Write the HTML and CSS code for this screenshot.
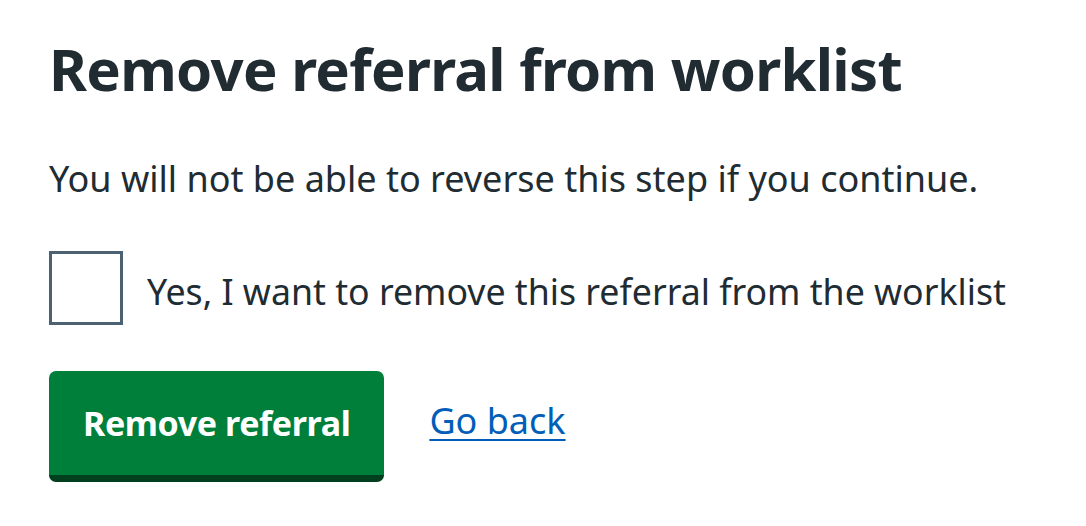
FILE: index.html
```html
<!DOCTYPE html>
<html lang="en">
<head>
<meta charset="utf-8">
<title>Remove referral from worklist</title>
<link rel="stylesheet" href="styles.css">
</head>
<body>
<main class="page">
  <h1 class="heading">Remove referral from worklist</h1>
  <p class="body-text">You will not be able to reverse this step if you continue.</p>
  <div class="checkbox-row">
    <span class="checkbox-box"></span>
    <label class="checkbox-label">Yes, I want to remove this referral from the worklist</label>
  </div>
  <div class="actions">
    <button class="button" type="button">Remove referral</button>
    <a class="link" href="#">Go back</a>
  </div>
</main>
</body>
</html>
```

FILE: styles.css
```css
html, body {
  margin: 0;
  padding: 0;
  background: #ffffff;
}

body {
  font-family: "Noto Sans", "Open Sans", sans-serif;
  color: #212b32;
}

.page {
  padding: 33px 49px 0;
}

.heading {
  margin: 0;
  font-size: 58px;
  line-height: 72px;
  letter-spacing: -0.7px;
  font-weight: 700;
  color: #212b32;
}

.body-text {
  margin: 49px 0 0;
  font-size: 36px;
  line-height: 49px;
}

.checkbox-row {
  display: flex;
  align-items: center;
  margin-top: 48px;
  gap: 24px;
}

.checkbox-box {
  box-sizing: border-box;
  width: 74px;
  height: 74px;
  border: 3px solid #4c6272;
  flex: none;
}

.checkbox-label {
  font-size: 35.7px;
  line-height: 49px;
  padding-top: 6px;
}

.actions {
  display: flex;
  align-items: flex-start;
  margin-top: 46px;
  gap: 45px;
}

.button {
  box-sizing: border-box;
  height: 111px;
  padding: 0 34px;
  border: 0;
  border-bottom: 7px solid #00401e;
  border-radius: 7px;
  background: #007f3b;
  color: #ffffff;
  font-family: "Noto Sans", "Open Sans", sans-serif;
  font-weight: 700;
  font-size: 34px;
  letter-spacing: -0.4px;
  line-height: 1;
  cursor: pointer;
}

.link {
  font-size: 36px;
  line-height: 49px;
  margin-top: 25px;
  color: #005eb8;
  text-decoration: underline;
  text-decoration-thickness: 2px;
  text-underline-offset: 5px;
}
```
